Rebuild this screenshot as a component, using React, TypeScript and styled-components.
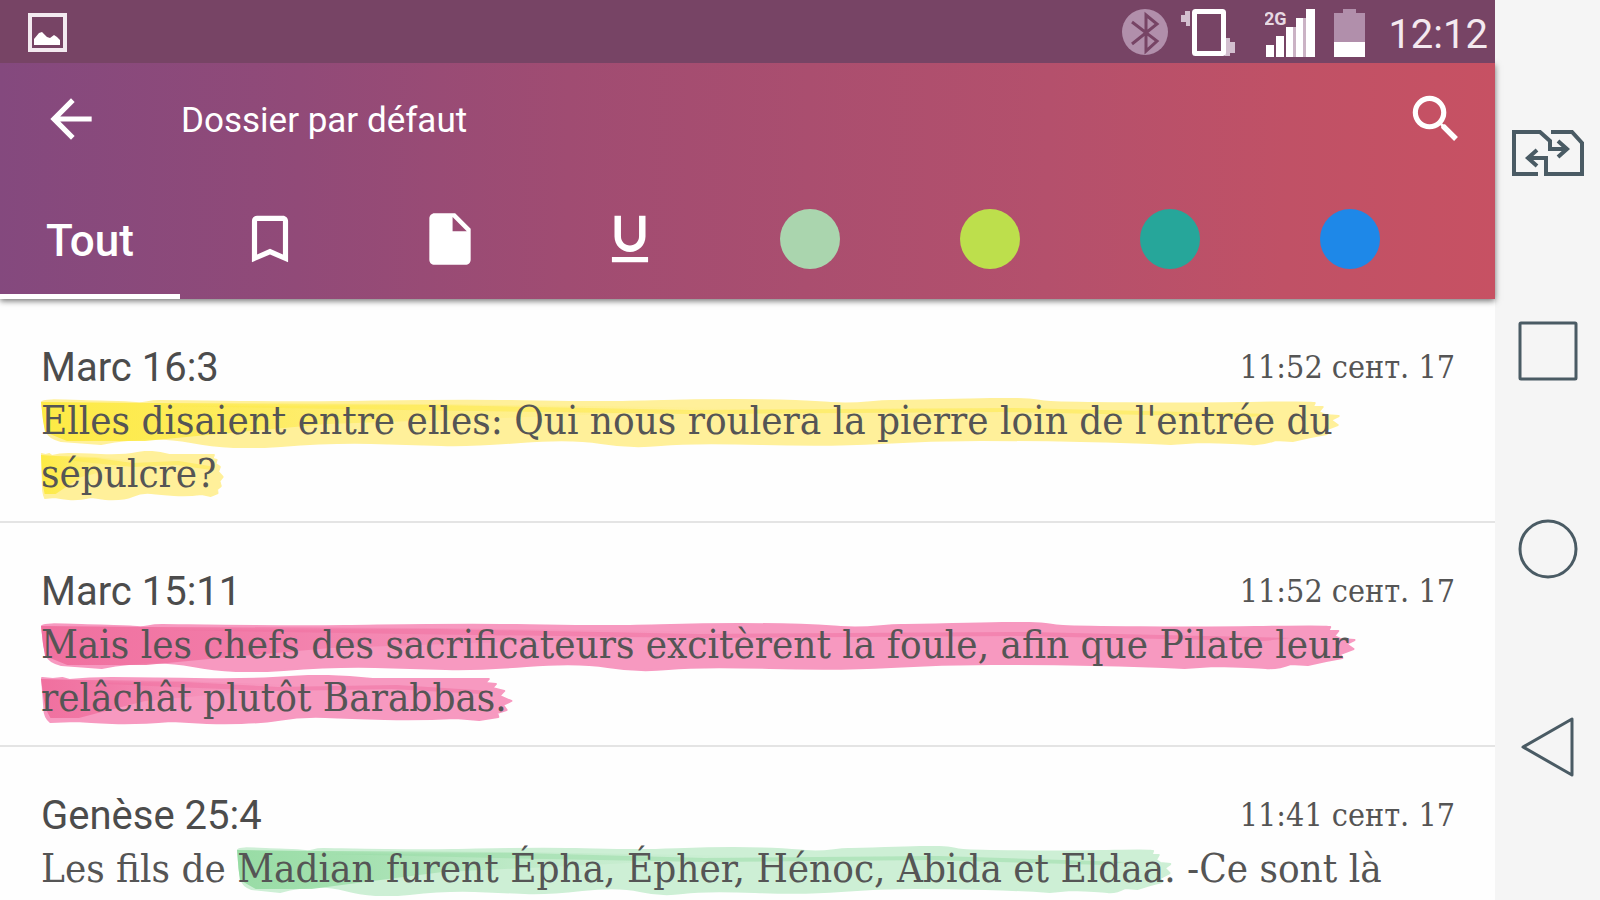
import React from "react";
import styled, { createGlobalStyle } from "styled-components";
import {
  MdArrowBack,
  MdBookmarkBorder,
  MdFormatUnderlined,
  MdInsertDriveFile,
  MdSearch,
} from "react-icons/md";

const serif = `"DejaVu Serif Condensed", "DejaVu Serif", serif`;

const GlobalStyle = createGlobalStyle`
  * { box-sizing: border-box; }
  body { margin: 0; background: #fff; font-family: Roboto, sans-serif; }
`;

const Device = styled.div`
  display: flex;
  height: 100vh;
  overflow: hidden;
`;

const Screen = styled.div`
  flex: 1;
  min-width: 0;
  display: flex;
  flex-direction: column;
  background: #fefefe;
`;

const StatusBar = styled.div`
  flex: none;
  position: relative;
  z-index: 1;
  height: 63px;
  display: flex;
  align-items: center;
  justify-content: space-between;
  padding: 2px 7px 0 28px;
  background: #774465;
  color: #fff;
`;

const StatusGroup = styled.div`
  display: flex;
  align-items: center;
  gap: 12px;
`;

const SignalGroup = styled.div`
  display: flex;
  align-items: center;
  gap: 18px;
  margin-left: 18px;
`;

const Clock = styled.time`
  margin-left: 10px;
  padding-top: 4px;
  font-size: 40px;
  line-height: 48px;
  color: #f4e9f0;
`;

const Header = styled.header`
  flex: none;
  position: relative;
  background: linear-gradient(91deg, #84497e 0%, #914a78 20%, #a04c72 38%, #b4506c 70%, #c05166 86%, #c75163 100%);
  box-shadow: 0 2px 6px rgba(0, 0, 0, 0.55);
  color: #fff;
`;

const Toolbar = styled.div`
  height: 112px;
  margin-bottom: 4px;
  padding: 0 28px 0 40px;
  display: flex;
  align-items: center;
`;

const IconButton = styled.button`
  display: flex;
  padding: 0;
  border: 0;
  background: none;
  color: inherit;
  font-size: 62px;
`;

const Title = styled.h1`
  flex: 1;
  margin: 0 0 0 79px;
  padding-top: 4px;
  font-size: 35px;
  line-height: 44px;
  font-weight: 400;
`;

const Tabs = styled.nav`
  display: flex;
  overflow: hidden;
`;

const Tab = styled.button<{ $active?: boolean }>`
  flex: 0 0 180px;
  height: 120px;
  display: flex;
  align-items: center;
  justify-content: center;
  padding: 0;
  border: 0;
  background: none;
  box-shadow: ${(p) => (p.$active ? "inset 0 -5px #fff" : "none")};
  color: inherit;
  font-family: inherit;
  font-size: ${(p) => (p.$active ? "44px" : "62px")};
  font-weight: 500;
`;

const TabLabel = styled.span`
  padding-top: 4px;
`;

const Swatch = styled.span<{ $color: string }>`
  width: 60px;
  height: 60px;
  border-radius: 50%;
  background: ${(p) => p.$color};
`;

const List = styled.main`
  flex: 1;
  min-height: 0;
  overflow: hidden;
`;

const Entry = styled.article`
  padding: 42px 40px 21px 41px;
  border-bottom: 2px solid #e4e4e4;
  color: #555;
`;

const EntryHead = styled.div`
  display: flex;
  justify-content: space-between;
  line-height: 53px;
`;

const Reference = styled.h2`
  margin: 0;
  font-size: 40px;
  font-weight: 400;
  color: #4c4c4c;
`;

const Stamp = styled.time`
  font-family: ${serif};
  font-size: 32px;
`;

const Verse = styled.p`
  margin: 0;
  font-family: ${serif};
  font-size: 40px;
  line-height: 53px;
`;

const Line = styled.span`
  display: block;
  white-space: nowrap;
`;

const Mark = styled.mark`
  position: relative;
  z-index: 0;
  display: inline-block;
  background: none;
  color: inherit;
`;

const Stroke = styled.svg`
  position: absolute;
  z-index: -1;
  left: 0;
  top: 4px;
  width: calc(100% + 8px);
  height: 50px;
`;

const NavBar = styled.nav`
  flex: 0 0 105px;
  display: flex;
  flex-direction: column;
  padding: 54px 0;
  background: #f5f5f5;
`;

const NavButton = styled.button`
  flex: 1;
  display: flex;
  align-items: center;
  justify-content: center;
  padding: 0;
  border: 0;
  background: none;
  color: #4a5b64;
`;

type Ink = { deep: string; base: string };
const inks: Record<string, Ink> = {
  yellow: { deep: "#fdea45", base: "#fff09a" },
  pink: { deep: "#f0709f", base: "#f799c0" },
  green: { deep: "#98dca5", base: "#cdefd5" },
};

const longEdge =
  "M1 4 C4 2 10 2 40 3 S85 4 95 5 S104 3 120 3 S230 5 300 4 S410 2 470 3 S520 4 560 4 S630 2 690 2 S760 3 790 5 S830 3 850 3 S900 2 950 1 S990 3 1010 4 S1130 6 1200 5 S1260 4 1274 5 L1272 9 L1282 9 L1278 14 L1284 17 L1298 18 L1290 22 L1297 27 L1284 32 L1286 36 L1270 39 L1252 43 L1235 42 Q1222 47 1210 46 T1160 44 L1130 46 Q1090 44 1040 43 T940 42 T840 45 T720 46 T620 47 T560 45 T480 44 T400 47 T330 45 T240 48 T150 44 T60 46 L20 43 Q8 40 6 34 T3 22 Z";
const shortEdge =
  "M1 3 L10 4 L18 3 L24 5 Q40 3 60 3 T130 4 T210 2 T280 4 L378 4 L375 8 L384 9 L381 13 L391 16 L387 21 L397 26 L390 30 L393 35 L385 38 L386 42 L370 45 L350 43 Q320 45 290 44 T240 42 T200 45 T140 48 L110 46 Q80 49 60 48 T30 46 L8 47 Q3 42 3 34 Z";

function Highlight({ ink, short, children }: { ink: string; short?: boolean; children: React.ReactNode }) {
  const { deep, base } = inks[ink];
  const id = `${ink}-${short ? "short" : "long"}`;
  const w = short ? 400 : 1300;
  return (
    <Mark>
      <Stroke viewBox={`0 0 ${w} 50`} preserveAspectRatio="none" aria-hidden="true">
        <defs>
          <linearGradient id={id}>
            <stop offset="0" stopColor={deep} />
            <stop offset="0.25" stopColor={deep} stopOpacity="0.75" />
            <stop offset="0.6" stopColor={deep} stopOpacity="0.2" />
            <stop offset="1" stopColor={deep} stopOpacity="0" />
          </linearGradient>
        </defs>
        <path
          d={short ? shortEdge : longEdge}
          fill={base}
          stroke={base}
          strokeWidth="2"
          strokeLinejoin="round"
        />
        <path
          d={`M0 4 L${w * 0.08} 5 L${w * 0.3} 6 L${w * 0.55} 10 L${w * 0.4} 18 L${w * 0.22} 26 L${w * 0.12} 38 L${w * 0.08} 43 L${w * 0.02} 43 L4 34 L2 22 Z`}
          fill={`url(#${id})`}
        />
        <path
          d={`M${w * 0.1} 8 L${w * 0.3} 7 L${w * 0.5} 12 L${w * 0.75} 10 L${w * 0.95} 16 L${w * 0.93} 19 L${w * 0.74} 14 L${w * 0.5} 16 L${w * 0.28} 12 Z`}
          fill={deep}
          opacity="0.5"
        />
      </Stroke>
      {children}
    </Mark>
  );
}

const PictureIcon = () => (
  <svg width="39" height="39" viewBox="0 0 39 39" aria-hidden="true">
    <rect x="2" y="2" width="35" height="35" fill="none" stroke="#f3eaf0" strokeWidth="4" />
    <path d="M6 32v-6l5-6 3-1 5 5 3 1 4-3 3 2 3 3v5z" fill="#fff" />
  </svg>
);

const BluetoothIcon = () => (
  <svg width="47" height="47" viewBox="0 0 47 47" aria-hidden="true">
    <circle cx="23" cy="23" r="23" fill="#b18fab" />
    <path d="M10 13l25 19-11 10V6l11 9-25 20" fill="none" stroke="#774465" strokeWidth="3" />
  </svg>
);

const VibrateIcon = () => (
  <svg width="54" height="47" viewBox="0 0 54 47" aria-hidden="true">
    <path d="M0 6h4V2h5v15H5v-4H0zM44 29h5v4h5v11h-5v3h-5z" fill="#d3bfcf" />
    <rect x="13.5" y="2.5" width="29" height="42" rx="1" fill="none" stroke="#fff" strokeWidth="5" />
  </svg>
);

const SignalIcon = () => (
  <svg width="51" height="50" viewBox="0 0 51 50" aria-hidden="true">
    <text x="-1" y="17" fontFamily="Roboto, sans-serif" fontSize="18" fontWeight="700" fill="#e6d9e3">2G</text>
    <path d="M1 37h8v12H1zM11 28h8v21h-8zM21 19h8v30h-8zM31 10h8v39h-8zM41 1h9v48h-9z" fill="#fff" />
    <path d="M28 19h3v30h-3zM38 10h3v39h-3z" fill="#cbb3c5" />
  </svg>
);

const BatteryIcon = () => (
  <svg width="32" height="50" viewBox="0 0 32 50" aria-hidden="true">
    <path d="M9 1h13v4h9v29H0V5h9z" fill="#b18fab" />
    <path d="M0 34h31v15H0z" fill="#fff" />
  </svg>
);

const swatches = [
  ["Vert clair", "#aad5ae"],
  ["Citron", "#bddf4c"],
  ["Turquoise", "#26a69a"],
  ["Bleu", "#1e88e8"],
];

function EntryTitle({ reference, stamp }: { reference: string; stamp: string }) {
  return (
    <EntryHead>
      <Reference>{reference}</Reference>
      <Stamp>{stamp}</Stamp>
    </EntryHead>
  );
}

export default function App() {
  return (
    <>
      <GlobalStyle />
      <Device>
        <Screen>
          <StatusBar>
            <PictureIcon />
            <StatusGroup>
              <BluetoothIcon />
              <VibrateIcon />
              <SignalGroup>
                <SignalIcon />
                <BatteryIcon />
              </SignalGroup>
              <Clock>12:12</Clock>
            </StatusGroup>
          </StatusBar>
          <Header>
            <Toolbar>
              <IconButton aria-label="Retour"><MdArrowBack /></IconButton>
              <Title>Dossier par défaut</Title>
              <IconButton aria-label="Rechercher"><MdSearch /></IconButton>
            </Toolbar>
            <Tabs>
              <Tab $active><TabLabel>Tout</TabLabel></Tab>
              <Tab aria-label="Signets"><MdBookmarkBorder /></Tab>
              <Tab aria-label="Notes"><MdInsertDriveFile /></Tab>
              <Tab aria-label="Soulignés"><MdFormatUnderlined /></Tab>
              {swatches.map(([name, color]) => (
                <Tab key={name} aria-label={name}><Swatch $color={color} /></Tab>
              ))}
            </Tabs>
          </Header>
          <List>
            <Entry>
              <EntryTitle reference="Marc 16:3" stamp="11:52 сент. 17" />
              <Verse>
                <Line><Highlight ink="yellow">Elles disaient entre elles: Qui nous roulera la pierre loin de l'entrée du</Highlight></Line>
                <Line><Highlight ink="yellow" short>sépulcre?</Highlight></Line>
              </Verse>
            </Entry>
            <Entry>
              <EntryTitle reference="Marc 15:11" stamp="11:52 сент. 17" />
              <Verse>
                <Line><Highlight ink="pink">Mais les chefs des sacrificateurs excitèrent la foule, afin que Pilate leur</Highlight></Line>
                <Line><Highlight ink="pink" short>relâchât plutôt Barabbas.</Highlight></Line>
              </Verse>
            </Entry>
            <Entry>
              <EntryTitle reference="Genèse 25:4" stamp="11:41 сент. 17" />
              <Verse>
                <Line>Les fils de <Highlight ink="green">Madian furent Épha, Épher, Hénoc, Abida et Eldaa</Highlight>. -Ce sont là</Line>
              </Verse>
            </Entry>
          </List>
        </Screen>
        <NavBar>
          <NavButton aria-label="Écran double">
            <svg width="72" height="46" viewBox="0 0 72 46" fill="none" stroke="currentColor" strokeWidth="4">
              <path d="M26 44H2V2h26l10 9v8h18M46 11l9 8-9 8" />
              <path d="M39 2h21l10 11v31H34V28H17M25 20l-9 8 9 8" />
            </svg>
          </NavButton>
          <NavButton aria-label="Applications récentes">
            <svg width="60" height="60" fill="none" stroke="currentColor" strokeWidth="3">
              <rect x="2" y="2" width="56" height="56" rx="1" />
            </svg>
          </NavButton>
          <NavButton aria-label="Accueil">
            <svg width="60" height="60" fill="none" stroke="currentColor" strokeWidth="3">
              <circle cx="30" cy="30" r="28" />
            </svg>
          </NavButton>
          <NavButton aria-label="Précédent">
            <svg width="54" height="60" fill="none" stroke="currentColor" strokeWidth="3" strokeLinejoin="round">
              <path d="M2 30L51 2v56z" />
            </svg>
          </NavButton>
        </NavBar>
      </Device>
    </>
  );
}
